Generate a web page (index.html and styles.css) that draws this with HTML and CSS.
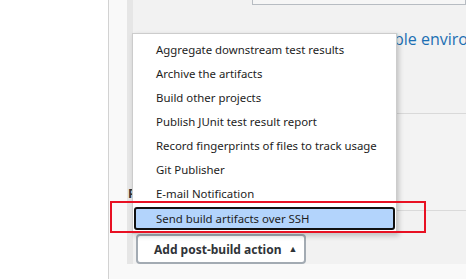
FILE: index.html
```html
<!DOCTYPE html>
<html>
<head>
<meta charset="utf-8">
<link rel="stylesheet" href="styles.css">
</head>
<body>
<div class="page">
  <aside class="sidebar"></aside>
  <main class="main">
    <section class="section">
      <div class="top">
        <div class="textbox"></div>
      </div>
      <div class="env-row">
        <span class="env-link">Build with available environment</span>
      </div>
      <div class="block1"></div>
      <div class="block2">
        <h3 class="post-title">Post-build Actions</h3>
      </div>
      <div class="block3">
        <button class="add-btn">Add post-build action <span class="caret">&#9650;</span></button>
      </div>
    </section>
  </main>
</div>

<ul class="menu">
  <li>Aggregate downstream test results</li>
  <li>Archive the artifacts</li>
  <li>Build other projects</li>
  <li>Publish JUnit test result report</li>
  <li>Record fingerprints of files to track usage</li>
  <li>Git Publisher</li>
  <li>E-mail Notification</li>
  <li class="active">Send build artifacts over SSH</li>
</ul>
<div class="annot"></div>
</body>
</html>
```

FILE: styles.css
```css
html, body {
  margin: 0;
  padding: 0;
  width: 466px;
  height: 279px;
  overflow: hidden;
  font-family: "Noto Sans", "Open Sans", sans-serif;
}
.page {
  display: flex;
  height: 279px;
}
.sidebar {
  width: 108px;
  background: #ffffff;
  border-right: 1px solid #d2d2d2;
  flex: none;
}
.main {
  flex: 1;
  min-width: 0;
  background: #f9f9f9;
  padding-left: 18px;
}
.section {
  height: 264px;
  border-left: 6px solid #e6e6e6;
  background: #f2f2f2;
  display: flex;
  flex-direction: column;
}
.top {
  height: 5px;
  padding-left: 119px;
}
.textbox {
  height: 4px;
  border: 1px solid #b7bcc2;
  border-top: none;
  background: #f6f6f6;
}
.env-row {
  height: 108px;
  padding-left: 140px;
  white-space: nowrap;
  overflow: hidden;
}
.env-link {
  display: block;
  margin-top: 23px;
  font-size: 16px;
  color: #1c6fb3;
  font-family: "Open Sans", sans-serif;
}
.block1 {
  height: 96px;
  border-top: 1px solid #d9d9d9;
  background: #f3f3f3;
}
.block2 {
  height: 23px;
  border-top: 1px solid #dadada;
}
.post-title {
  margin: -27px 0 0 -5px;
  font-size: 13px;
  color: #333;
}
.block3 {
  padding-left: 3px;
}
.add-btn {
  height: 30px;
  width: 170px;
  border: 2px solid #a3abb3;
  border-radius: 4px;
  background: #ffffff;
  font-family: "Noto Sans", sans-serif;
  font-weight: bold;
  font-size: 12px;
  color: #2f3338;
  padding: 0 0 0 16px;
  text-align: left;
}
.caret {
  font-size: 9px;
  margin-left: 4px;
  vertical-align: 2px;
}
.menu {
  position: absolute;
  left: 132px;
  top: 33px;
  width: 263px;
  margin: 0;
  padding: 4px 0 3px;
  list-style: none;
  background: #ffffff;
  border: 1px solid #cccccc;
  box-shadow: 2px 2px 5px rgba(0,0,0,0.2);
}
.menu li {
  height: 24px;
  line-height: 24px;
  padding-left: 23px;
  font-size: 11.4px;
  color: #1d1d1d;
  white-space: nowrap;
}
.menu li.active {
  margin: 1px 1px 0 1px;
  height: 19px;
  line-height: 19px;
  padding-left: 20px;
  background: #b3d4fc;
  border: 2px solid #111;
  border-radius: 3px;
}
.annot {
  position: absolute;
  left: 110px;
  top: 201px;
  width: 312px;
  height: 28px;
  border: 2px solid #e81123;
}
```
